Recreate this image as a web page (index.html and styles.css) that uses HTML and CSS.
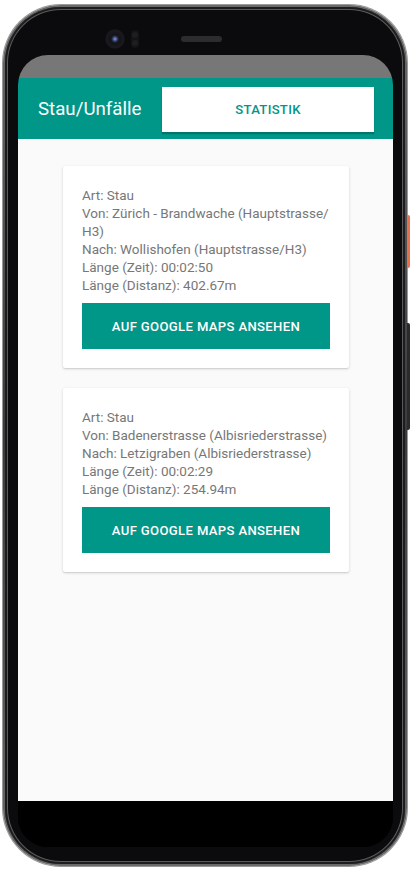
FILE: index.html
```html
<!DOCTYPE html>
<html lang="de">
<head>
<meta charset="utf-8">
<title>Stau/Unfälle</title>
<link rel="stylesheet" href="styles.css">
</head>
<body>
<div class="phone">
  <span class="side-btn side-btn-orange"></span>
  <span class="side-btn side-btn-dark"></span>
  <div class="bezel">
    <div class="top-hw">
      <span class="camera"></span>
      <span class="sensor"><i></i><i></i></span>
      <span class="speaker"></span>
    </div>
    <div class="screen">
      <div class="statusbar"></div>
      <header class="appbar">
        <h1 class="title">Stau/Unfälle</h1>
        <button class="tab">STATISTIK</button>
      </header>
      <main class="content">
        <section class="card">
          <div class="info">
            <p>Art: Stau</p>
            <p>Von: Zürich - Brandwache (Hauptstrasse/<wbr>H3)</p>
            <p>Nach: Wollishofen (Hauptstrasse/H3)</p>
            <p>Länge (Zeit): 00:02:50</p>
            <p>Länge (Distanz): 402.67m</p>
          </div>
          <button class="maps-btn">AUF GOOGLE MAPS ANSEHEN</button>
        </section>
        <section class="card">
          <div class="info">
            <p>Art: Stau</p>
            <p>Von: Badenerstrasse (Albisriederstrasse)</p>
            <p>Nach: Letzigraben (Albisriederstrasse)</p>
            <p>Länge (Zeit): 00:02:29</p>
            <p>Länge (Distanz): 254.94m</p>
          </div>
          <button class="maps-btn">AUF GOOGLE MAPS ANSEHEN</button>
        </section>
      </main>
      <div class="navbar"></div>
    </div>
  </div>
</div>
</body>
</html>
```

FILE: styles.css
```css
* { box-sizing: border-box; }
html, body { margin: 0; padding: 0; background: #ffffff; }
body {
  width: 411px;
  height: 870px;
  overflow: hidden;
  font-family: Roboto, "Liberation Sans", sans-serif;
}
.phone {
  position: relative;
  width: 404px;
  height: 861px;
  margin: 5px 0 0 3px;
  border-radius: 58px;
  padding: 2px;
  background: linear-gradient(180deg, #6a6a6a, #3b3b3b 50%, #6a6a6a);
  box-shadow: 0 0 0 1px #9a9a9a;
}
.side-btn {
  position: absolute;
  right: -3px;
  width: 3px;
  border-radius: 0 2px 2px 0;
}
.side-btn-orange { top: 210px; height: 53px; background: #e8704a; }
.side-btn-dark { top: 318px; height: 107px; background: #2b2b2b; }
.bezel {
  width: 100%;
  height: 100%;
  border-radius: 56px;
  background: #0b0b0d;
  box-shadow: inset 0 0 0 2px #1d1d1f, inset 0 0 0 3px #5a5a5a;
  padding: 48px 12px 17px 13px;
  display: flex;
  flex-direction: column;
  position: relative;
}
.top-hw {
  position: absolute;
  top: 22px;
  left: 100px;
  display: flex;
  align-items: center;
  gap: 6px;
}
.camera {
  width: 20px;
  height: 20px;
  border-radius: 50%;
  background: radial-gradient(circle at 50% 50%, #8aa0d8 0, #3a4a7a 2px, #121218 4px, #1a1a1e 9px, #0e0e10 10px);
}
.sensor {
  display: flex;
  flex-direction: column;
  gap: 2px;
  padding: 2px 1px;
  border-radius: 5px;
  background: #141416;
}
.sensor i {
  width: 6px;
  height: 6px;
  border-radius: 50%;
  background: #1e1e22;
}
.speaker {
  margin-left: 36px;
  width: 41px;
  height: 6px;
  border-radius: 3px;
  background: #2c2c2e;
}
.screen {
  flex: 1;
  display: flex;
  flex-direction: column;
  border-radius: 30px;
  overflow: hidden;
  background: #000;
}
.statusbar {
  height: 23px;
  background: #777777;
  flex-shrink: 0;
}
.appbar {
  height: 61px;
  background: #009688;
  display: flex;
  align-items: center;
  justify-content: space-between;
  padding: 0 19px 0 20px;
  flex-shrink: 0;
}
.title {
  margin: 0;
  font-size: 18.7px;
  font-weight: 400;
  color: #ffffff;
}
.tab {
  width: 212px;
  height: 45px;
  margin-top: 1px;
  border: none;
  background: #ffffff;
  color: #009688;
  font-family: Roboto, "Liberation Sans", sans-serif;
  font-size: 13.1px;
  font-weight: 500;
  letter-spacing: 0.3px;
  box-shadow: 0 2px 1px rgba(0, 0, 0, 0.22);
}
.content {
  flex: 1;
  background: #fafafa;
  display: flex;
  flex-direction: column;
  align-items: center;
  gap: 20px;
  padding: 27px 0 0 1px;
}
.card {
  width: 286px;
  background: #ffffff;
  border-radius: 2px;
  box-shadow: 0 1px 3px rgba(0, 0, 0, 0.16), 0 1px 1px rgba(0, 0, 0, 0.06);
  padding: 20px 19px 19px 19px;
}
.info {
  margin-right: -6px;
}
.info p {
  margin: 0;
  font-size: 13.5px;
  line-height: 18px;
  color: #777777;
}
.maps-btn {
  display: block;
  width: 248px;
  height: 46px;
  margin-top: 9px;
  border: none;
  background: #009688;
  color: #ffffff;
  font-family: Roboto, "Liberation Sans", sans-serif;
  font-size: 13.1px;
  font-weight: 500;
  letter-spacing: 0.35px;
}
.navbar {
  height: 46px;
  background: #000000;
  flex-shrink: 0;
}
```
